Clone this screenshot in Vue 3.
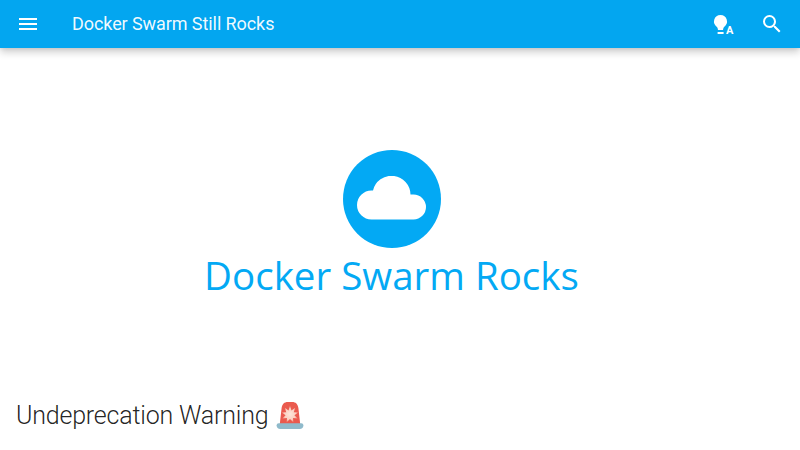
<template>
  <div class="page">
    <header class="header">
      <button class="icon-btn menu-btn" aria-label="Menu">
        <svg viewBox="0 0 24 24" width="24" height="24"><path d="M3 6h18v2H3V6m0 5h18v2H3v-2m0 5h18v2H3v-2z" /></svg>
      </button>
      <div class="site-title">Docker Swarm Still Rocks</div>
      <button class="icon-btn palette-btn" aria-label="Switch palette">
        <svg viewBox="0 0 24 24" width="24" height="24">
          <path d="M9.5 3a6.5 6.5 0 0 0-3.6 11.9c.5.4.7.9.8 1.5l.3 1.6h5l.3-1.6c.1-.6.3-1.1.8-1.5A6.5 6.5 0 0 0 9.5 3z" />
          <rect x="6.6" y="20" width="6" height="2" />
          <text x="15" y="22" class="auto-a">A</text>
        </svg>
      </button>
      <button class="icon-btn" aria-label="Search">
        <svg viewBox="0 0 24 24" width="24" height="24"><path d="M9.5 3A6.5 6.5 0 0 1 16 9.5c0 1.61-.59 3.09-1.56 4.23l.27.27h.79l5 5-1.5 1.5-5-5v-.79l-.27-.27A6.516 6.516 0 0 1 9.5 16 6.5 6.5 0 0 1 3 9.5 6.5 6.5 0 0 1 9.5 3m0 2C7 5 5 7 5 9.5S7 14 9.5 14 14 12 14 9.5 12 5 9.5 5z" /></svg>
      </button>
    </header>

    <main class="content">
      <div class="logo">
        <div class="logo-circle">
          <svg viewBox="0 0 69 44" width="69" height="44"><path d="M14.5 43.5A14.5 14.5 0 0 1 14.5 14.5h1.5A19 19 0 0 1 53.5 18.5h3A12.5 12.5 0 0 1 56.5 43.5z" /></svg>
        </div>
        <div class="logo-text">Docker Swarm Rocks</div>
      </div>

      <h2 class="heading">
        Undeprecation Warning
        <svg class="siren" viewBox="0 0 30 30" width="34" height="34">
          <defs>
            <radialGradient id="glow" cx="50%" cy="50%" r="50%">
              <stop offset="0%" stop-color="#fde6da" />
              <stop offset="70%" stop-color="#fbcfc0" />
              <stop offset="100%" stop-color="#f59a88" />
            </radialGradient>
          </defs>
          <path d="M6 22 7.6 8C8 4.4 10 2.6 13 2.6h4c3 0 5 1.8 5.4 5.4L24 22z" fill="#ea5a4e" />
          <path d="m15 6 1.3 4.2 3.3-2.4-1.3 3.9 3.9.3-3.3 2.4 2.8 2.8-4-.5.2 3.8-2.9-2.8-2.9 2.8.2-3.8-4 .5 2.8-2.8-3.3-2.4 3.9-.3-1.3-3.9 3.3 2.4z" fill="url(#glow)" />
          <path d="M3.2 23.2c0-1 .8-1.7 1.8-1.7h20c1 0 1.8.7 1.8 1.7 0 2.2-1.3 3.3-3.2 3.3H6.4c-1.9 0-3.2-1.1-3.2-3.3z" fill="#8fbacb" />
        </svg>
      </h2>
    </main>
  </div>
</template>

<script setup>
</script>

<style>
html, body {
  margin: 0;
  background: #fff;
  overflow: hidden;
}
</style>

<style scoped>
.page {
  width: 800px;
  height: 450px;
  overflow: hidden;
  font-family: Roboto, "Liberation Sans", sans-serif;
  color: rgba(0, 0, 0, 0.87);
}

.header {
  height: 48px;
  display: flex;
  align-items: center;
  padding: 0 6px 0 8px;
  background: #03a6f0;
  color: #fff;
  box-shadow: 0 0 4px rgba(0, 0, 0, 0.1), 0 4px 8px rgba(0, 0, 0, 0.2);
}

.icon-btn {
  width: 40px;
  height: 40px;
  padding: 0;
  margin: 0 2px 0 0;
  display: flex;
  align-items: center;
  justify-content: center;
  border: none;
  background: none;
  color: inherit;
}

.icon-btn svg {
  fill: currentColor;
  display: block;
}

.palette-btn {
  margin-right: 9px;
}

.auto-a {
  font-family: Roboto, sans-serif;
  font-size: 11px;
  font-weight: 700;
}

.menu-btn {
  margin-right: 0;
}

.site-title {
  flex: 1;
  margin-left: 24px;
  font-size: 18px;
  line-height: 48px;
  letter-spacing: -0.08px;
  color: rgba(255, 255, 255, 0.95);
  white-space: nowrap;
}

.content {
  padding: 102px 16px 0;
}

.logo {
  display: flex;
  flex-direction: column;
  align-items: center;
  padding-right: 17px;
}

.logo-circle {
  width: 98px;
  height: 98px;
  border-radius: 50%;
  background: #03a9f4;
  display: flex;
  align-items: center;
  justify-content: center;
}

.logo-circle svg {
  fill: #fff;
  display: block;
  margin-bottom: 3px;
}

.logo-text {
  font-family: "Open Sans", "Noto Sans", sans-serif;
  font-size: 38.5px;
  line-height: 54px;
  color: #03a9f4;
  white-space: nowrap;
}

.heading {
  margin: 94px 0 0;
  display: flex;
  align-items: center;
  gap: 5px;
  font-size: 25px;
  font-weight: 300;
  line-height: 40px;
  letter-spacing: -0.2px;
  white-space: nowrap;
}

.siren {
  display: block;
}
</style>
